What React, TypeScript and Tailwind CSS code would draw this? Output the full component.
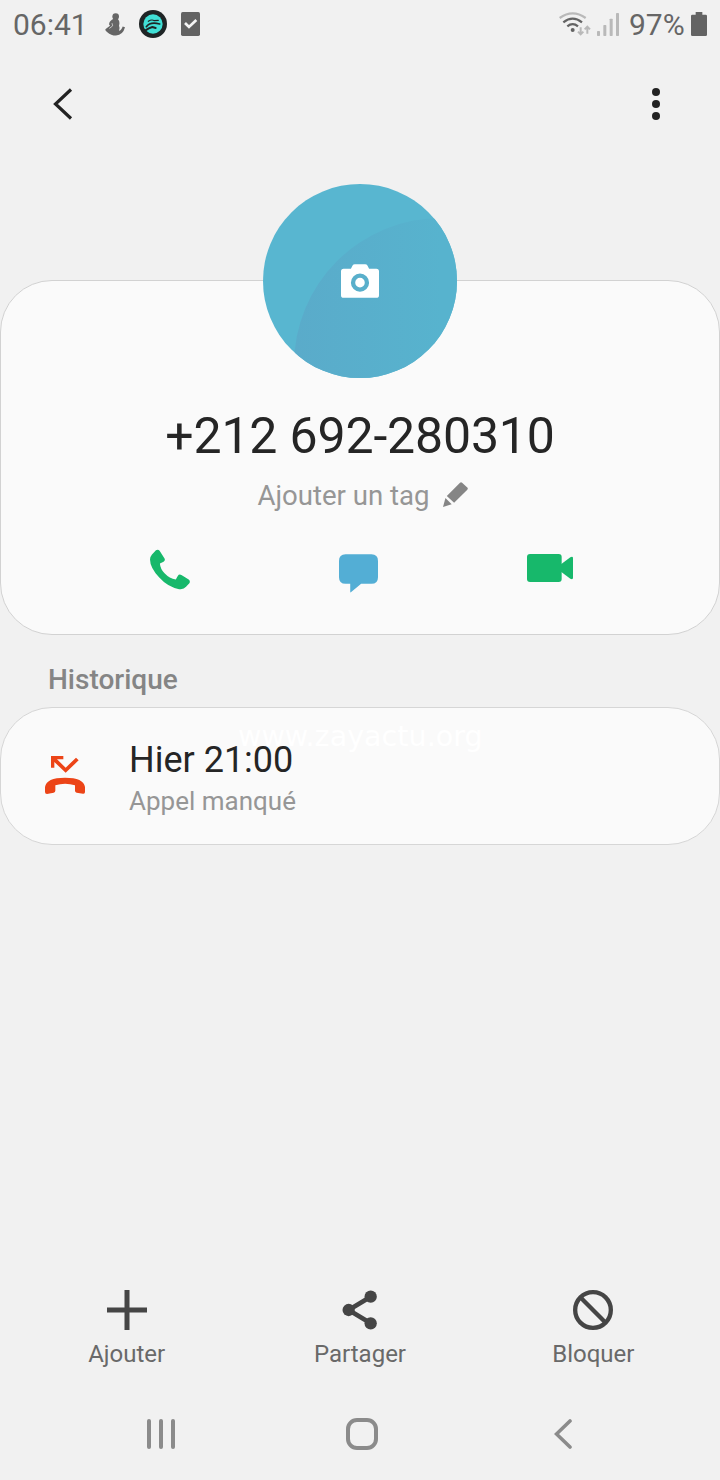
import React from 'react';

interface IconProps {
  className?: string;
}

const PersonIcon: React.FC<IconProps> = ({ className }) => (
  <svg className={className} viewBox="0 0 60 68" fill="currentColor">
    <circle cx="32" cy="10" r="10" />
    <path d="M26 17 Q14 22 12 33 L15 38 L1 48 Q0 53 7 57 Q18 67 33 67 Q54 65 60 42 L53 40 Q49 52 42 53 Q46 46 42 38 Q46 25 38 17 Z" />
    <path d="M21 30 L23 38 L13 46" fill="none" stroke="#f1f1f1" strokeWidth="2" />
  </svg>
);

const RunnerIcon: React.FC<IconProps> = ({ className }) => (
  <svg className={className} viewBox="0 0 84 84">
    <circle cx="42" cy="42" r="42" fill="#1f2526" />
    <circle cx="42" cy="42" r="29" fill="#40e0d6" />
    <g fill="none" stroke="#1f2526" strokeLinecap="round" strokeLinejoin="round">
      <path d="M28 34 Q38 27 46 32 L58 31" strokeWidth="3.5" />
      <path d="M22 50 Q34 34 62 42" strokeWidth="5" />
      <path d="M18 62 Q30 54 40 51 L50 54" strokeWidth="6" />
    </g>
  </svg>
);

const CheckBoxIcon: React.FC<IconProps> = ({ className }) => (
  <svg className={className} viewBox="0 0 57 72">
    <rect width="57" height="72" rx="5" fill="#636363" />
    <path d="M12 33 L24 45 L46 24" fill="none" stroke="#f5f5f5" strokeWidth="8" />
  </svg>
);

const WifiIcon: React.FC<IconProps> = ({ className }) => (
  <svg className={className} viewBox="0 0 96 72" fill="none">
    <path d="M2 18 Q41 -10 80 18" stroke="#b9b9b9" strokeWidth="7" />
    <path d="M13 31 Q41 9 69 31" stroke="#636363" strokeWidth="7" />
    <path d="M25 43 Q41 30 57 43" stroke="#636363" strokeWidth="7" />
    <circle cx="41" cy="54" r="6" fill="#636363" />
    <g stroke="#b9b9b9" strokeWidth="6">
      <path d="M65 46 V66 M57 59 L65 67 L73 59" />
      <path d="M85 65 V45 M77 52 L85 44 L93 52" />
    </g>
  </svg>
);

const SignalIcon: React.FC<IconProps> = ({ className }) => (
  <svg className={className} viewBox="0 0 66 69" fill="#b9b9b9">
    <rect x="0" y="54" width="9" height="15" rx="2" />
    <rect x="19" y="36" width="9" height="33" rx="2" />
    <rect x="38" y="17" width="9" height="52" rx="2" />
    <rect x="57" y="0" width="9" height="69" rx="2" />
  </svg>
);

const BatteryIcon: React.FC<IconProps> = ({ className }) => (
  <svg className={className} viewBox="0 0 48 72" fill="#636363">
    <path d="M14 0 H34 V8 H44 Q48 8 48 12 V68 Q48 72 44 72 H4 Q0 72 0 68 V12 Q0 8 4 8 H14 Z" />
  </svg>
);

const CameraIcon: React.FC<IconProps> = ({ className }) => (
  <svg className={className} viewBox="0 0 115 102">
    <path
      d="M8 14 H30 L35 4 Q37 0 42 0 H73 Q78 0 80 4 L85 14 H107 Q115 14 115 22 V94 Q115 102 107 102 H8 Q0 102 0 94 V22 Q0 14 8 14 Z"
      fill="#fff"
    />
    <circle cx="57.5" cy="56" r="21" fill="#fff" stroke="#59afcb" strokeWidth="13" />
  </svg>
);

const PencilIcon: React.FC<IconProps> = ({ className }) => (
  <svg className={className} viewBox="0 0 72 72" fill="#858585">
    <path d="M49 2 Q52 -1 55 2 L70 16 Q73 19 70 22 L32 60 L11 40 Z" />
    <path d="M7 46 L25 64 L0 72 Z" />
  </svg>
);

const PhoneIcon: React.FC<IconProps> = ({ className }) => (
  <svg className={className} viewBox="0 0 121 121" fill="#17b86b">
    <path d="M18 2 Q25 -2 29 4 L44 27 Q47 33 41 37 L30 42 Q31 58 44 72 Q59 88 78 91 L84 80 Q88 73 95 77 L117 91 Q123 96 119 102 L109 113 Q102 122 88 120 Q54 114 28 85 Q0 54 0 30 Q0 22 6 15 Z" />
  </svg>
);

const MessageIcon: React.FC<IconProps> = ({ className }) => (
  <svg className={className} viewBox="0 0 118 116" fill="#53aed5">
    <path d="M20 0 H98 Q118 0 118 20 V69 Q118 89 98 89 H67 L36 115 Q34 116 34 113 V89 H20 Q0 89 0 69 V20 Q0 0 20 0 Z" />
  </svg>
);

const VideoIcon: React.FC<IconProps> = ({ className }) => (
  <svg className={className} viewBox="0 0 138 84" fill="#17b86b">
    <rect width="104" height="84" rx="9" />
    <path d="M102 31 L130 10 Q138 6 138 13 V71 Q138 78 130 74 L102 53 Z" />
  </svg>
);

const MissedCallIcon: React.FC<IconProps> = ({ className }) => (
  <svg className={className} viewBox="0 0 120 114" fill="#ec4417">
    <path d="M18 0 H55 V10 H36 L62 35 L93 5 L101 13 L62 50 L28 18 V35 H18 Z" />
    <path d="M0 93 Q4 65 60 65 Q116 65 120 93 V108 Q120 114 114 113 L95 110 Q90 109 90 104 V88 Q60 78 31 88 V104 Q31 109 26 110 L6 114 Q0 114 0 108 Z" />
  </svg>
);

const AddIcon: React.FC<IconProps> = ({ className }) => (
  <svg className={className} viewBox="0 0 120 120" stroke="#454545" strokeWidth="15">
    <path d="M60 0 V120 M0 60 H120" />
  </svg>
);

const ShareIcon: React.FC<IconProps> = ({ className }) => (
  <svg className={className} viewBox="-7 0 120 120" fill="#454545">
    <path d="M85 20 L19 60 L85 100" fill="none" stroke="#454545" strokeWidth="14" />
    <circle cx="19" cy="60" r="18.5" />
    <circle cx="85" cy="20" r="18.5" />
    <circle cx="85" cy="100" r="18.5" />
  </svg>
);

const BlockIcon: React.FC<IconProps> = ({ className }) => (
  <svg className={className} viewBox="0 0 120 120" fill="none" stroke="#454545" strokeWidth="13">
    <circle cx="60" cy="60" r="53.5" />
    <path d="M22 22 L98 98" />
  </svg>
);

const ACTIONS = [
  { label: 'Ajouter', Icon: AddIcon },
  { label: 'Partager', Icon: ShareIcon },
  { label: 'Bloquer', Icon: BlockIcon },
];

const StatusBar = () => (
  <div className="h-[50px] shrink-0 flex items-center justify-between pl-[13px] pr-[13px] text-[30px] leading-[50px] text-[#666666]">
    <div className="flex items-center">
      <span className="w-[92px]">06:41</span>
      <PersonIcon className="w-[20px] h-[23px] -mt-[2px]" />
      <RunnerIcon className="w-[28px] h-[28px] ml-[14px] -mt-[2px]" />
      <CheckBoxIcon className="w-[19px] h-[24px] ml-[14px] -mt-[2px]" />
    </div>
    <div className="flex items-center">
      <WifiIcon className="w-[32px] h-[24px] -mt-[2px]" />
      <SignalIcon className="w-[22px] h-[23px] ml-[6px] -mt-[1px]" />
      <span className="ml-[10px] w-[62px]">97%</span>
      <BatteryIcon className="w-[16px] h-[24px] -mt-[2px]" />
    </div>
  </div>
);

const Header = () => (
  <div className="h-[108px] shrink-0 flex items-center justify-between pl-[53px] pr-[58px]">
    <button aria-label="Retour">
      <svg className="w-[20px] h-[32px]" viewBox="0 0 20 32" fill="none" stroke="#222" strokeWidth="3.2">
        <path d="M18 1.5 L2.5 16 L18 30.5" />
      </svg>
    </button>
    <button aria-label="Options" className="flex flex-col gap-[4px] px-[2px]">
      <span className="w-[8px] h-[8px] rounded-full bg-[#222222]" />
      <span className="w-[8px] h-[8px] rounded-full bg-[#222222]" />
      <span className="w-[8px] h-[8px] rounded-full bg-[#222222]" />
    </button>
  </div>
);

const Avatar = () => (
  <div className="relative w-[194px] h-[194px] -mt-[97px] shrink-0 rounded-full overflow-hidden flex items-center justify-center">
    <svg className="absolute inset-0 w-full h-full" viewBox="0 0 194 194">
      <defs>
        <linearGradient id="wave" x1="32" x2="178" y1="0" y2="0" gradientUnits="userSpaceOnUse">
          <stop offset="0" stopColor="#5aabca" />
          <stop offset="1" stopColor="#57b3ce" />
        </linearGradient>
      </defs>
      <rect width="194" height="194" fill="#58b6d0" />
      <circle cx="178" cy="181" r="147" fill="url(#wave)" />
    </svg>
    <CameraIcon className="relative w-[38px] h-[34px]" />
  </div>
);

const ContactCard = () => (
  <section className="mt-[122px] h-[355px] shrink-0 flex flex-col items-center bg-[#fafafa] border border-[#d2d2d2] rounded-[52px]">
    <Avatar />
    <h1 className="mt-[28px] text-[50px] leading-[60px] tracking-[-0.15px] text-[#252525]">+212 692-280310</h1>
    <div className="mt-[13px] pl-[5px] flex items-center gap-[13px] text-[27.6px] leading-[34px] text-[#969696]">
      <span>Ajouter un tag</span>
      <PencilIcon className="w-[25px] h-[25px] -mt-[3px]" />
    </div>
    <div className="mt-[36px] w-[570px] grid grid-cols-3 justify-items-center">
      <PhoneIcon className="w-[40px] h-[41px]" />
      <MessageIcon className="w-[39px] h-[39px] mt-[5px] mr-[4px]" />
      <VideoIcon className="w-[46px] h-[28px] mt-[5px]" />
    </div>
  </section>
);

const HistoryCard = () => (
  <section className="relative mt-[10px] h-[138px] shrink-0 flex items-center pl-[44px] bg-[#fafafa] border border-[#d6d6d6] rounded-[52px]">
    <span className="absolute left-[237px] top-[9px] font-['DejaVu_Sans'] text-[28.6px] leading-[38px] text-white whitespace-nowrap">
      www.zayactu.org
    </span>
    <MissedCallIcon className="w-[40px] h-[38px] -mt-[2px]" />
    <div className="relative ml-[44px] pt-[6px]">
      <p className="text-[36px] leading-[44px] text-[#252525]">Hier 21:00</p>
      <p className="text-[26px] leading-[38px] text-[#969696]">Appel manqué</p>
    </div>
  </section>
);

const BottomActions = () => (
  <div className="mt-auto h-[110px] shrink-0 px-[10px] grid grid-cols-3 justify-items-center">
    {ACTIONS.map(({ label, Icon }) => (
      <button key={label} className="flex flex-col items-center">
        <Icon className="w-[40px] h-[40px]" />
        <span className="mt-[9px] text-[24px] leading-[30px] text-[#696969]">{label}</span>
      </button>
    ))}
  </div>
);

const NavBar = () => (
  <div className="h-[80px] shrink-0 ml-[60px] w-[603px] grid grid-cols-3 place-items-center pb-[2px]">
    <div className="flex gap-[8px] -mt-[10px]">
      <span className="w-[4px] h-[30px] rounded-full bg-[#8b8b8b]" />
      <span className="w-[4px] h-[30px] rounded-full bg-[#8b8b8b]" />
      <span className="w-[4px] h-[30px] rounded-full bg-[#8b8b8b]" />
    </div>
    <div className="w-[32px] h-[32px] -mt-[10px] rounded-[11px] border-4 border-[#8b8b8b]" />
    <svg className="w-[18px] h-[30px] -mt-[10px]" viewBox="0 0 18 30" fill="none" stroke="#8b8b8b" strokeWidth="3.6" strokeLinecap="round">
      <path d="M16 2 L2.5 15 L16 28" />
    </svg>
  </div>
);

const App: React.FC = () => {
  return (
    <div className="w-[720px] h-[1480px] flex flex-col overflow-hidden bg-[#f1f1f1] font-['Roboto',sans-serif]">
      <StatusBar />
      <Header />
      <ContactCard />
      <h2 className="mt-[27px] ml-[48px] text-[28px] leading-[35px] font-medium text-[#858585]">Historique</h2>
      <HistoryCard />
      <BottomActions />
      <NavBar />
    </div>
  );
};

export default App;
